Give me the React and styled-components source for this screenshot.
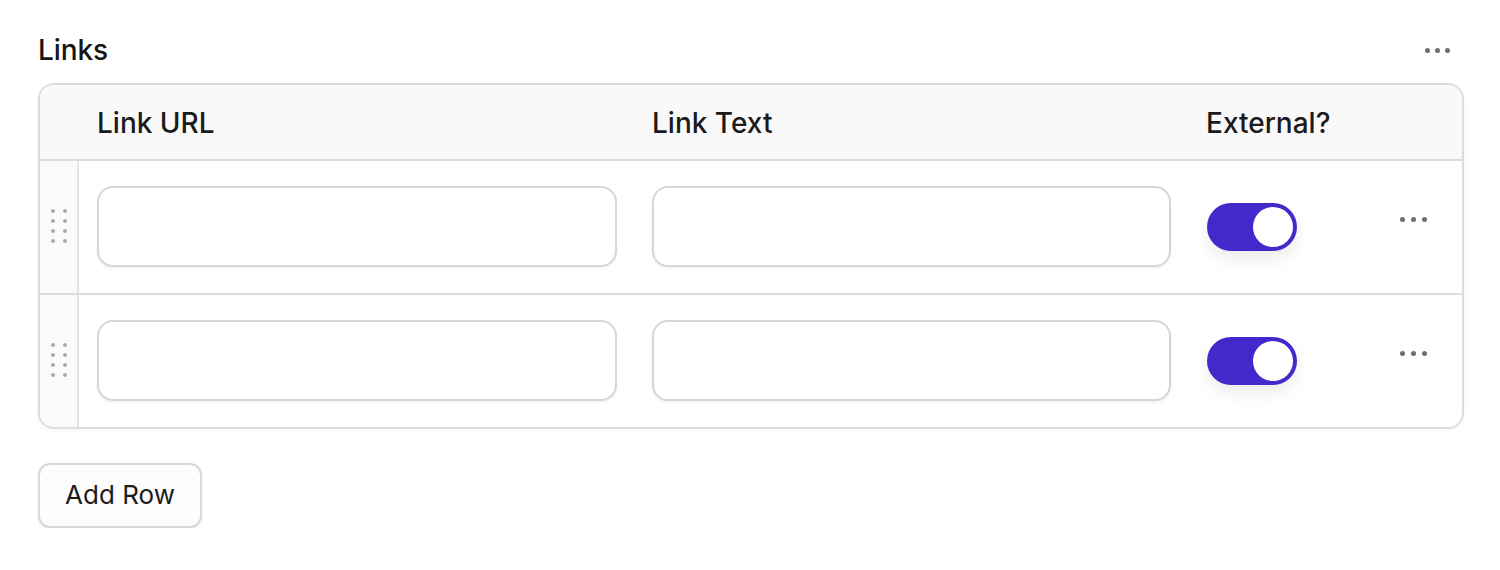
import React from "react";
import styled, { createGlobalStyle } from "styled-components";

const Global = createGlobalStyle`
  html, body { margin: 0; padding: 0; background: #fff; }
  body { font-family: Inter, "Noto Sans", "Liberation Sans", sans-serif; color: #1b1b1b; }
  * { box-sizing: border-box; }
`;

const Page = styled.div`
  padding: 26px 36px 0 38px;
  width: 1500px;
`;

const TitleRow = styled.div`
  display: flex;
  align-items: center;
  justify-content: space-between;
  height: 48px;
  margin-bottom: 9px;
`;

const Title = styled.h2`
  margin: 0;
  font-size: 28px;
  font-weight: 500;
  color: #161616;
  letter-spacing: -0.1px;
`;

const Dots = styled.div`
  display: flex;
  gap: ${(p) => p.$gap || 5}px;
  align-items: center;
  padding: ${(p) => p.$pad || "0"};
  span {
    width: ${(p) => p.$size || 5}px;
    height: ${(p) => p.$size || 5}px;
    border-radius: 50%;
    background: ${(p) => p.$color || "#6b6b6b"};
  }
`;

const Table = styled.div`
  border: 2px solid #dcdcdc;
  border-radius: 16px;
  overflow: hidden;
  width: 1426px;
  box-shadow: 0 2px 4px rgba(0, 0, 0, 0.04);
`;

const Row = styled.div`
  display: grid;
  grid-template-columns: 39px 556px 554px 1fr;
  background: ${(p) => (p.$header ? "#f9f9f9" : "#fff")};
  height: ${(p) => (p.$header ? 74 : 134)}px;
  border-top: ${(p) => (p.$first ? "none" : "2px solid #dcdcdc")};
`;

const HandleCell = styled.div`
  background: ${(p) => (p.$header ? "#f9f9f9" : "#fafafa")};
  border-right: ${(p) => (p.$header ? "none" : "2px solid #e3e3e3")};
  display: flex;
  align-items: center;
  justify-content: center;
`;

const HandleGrid = styled.div`
  display: grid;
  grid-template-columns: 4px 4px;
  column-gap: 8px;
  row-gap: 6px;
  margin-top: -2px;
  span {
    width: 4px;
    height: 4px;
    border-radius: 50%;
    background: #a9a9ae;
  }
`;

const HeadCell = styled.div`
  display: flex;
  align-items: center;
  padding-left: ${(p) => p.$pl || 18}px;
  font-size: 28px;
  font-weight: 500;
  color: #1b1b1b;
  padding-top: 2px;
`;

const Cell = styled.div`
  display: flex;
  align-items: center;
  padding: 0 18px;
  padding-bottom: 2px;
`;

const Input = styled.input`
  width: 521px;
  height: 81px;
  border: 2px solid #d6d6d6;
  border-radius: 16px;
  background: #fff;
  box-shadow: 0 2px 3px rgba(0, 0, 0, 0.05);
  outline: none;
  font-size: 24px;
  padding: 0 20px;
  margin-left: ${(p) => p.$ml || 0}px;
`;

const LastCell = styled.div`
  display: flex;
  align-items: center;
  justify-content: space-between;
  padding: 0 35px 0 18px;
  margin-top: -16px;
`;

const Toggle = styled.div`
  width: 90px;
  height: 48px;
  border-radius: 24px;
  background: #4129cc;
  position: relative;
  box-shadow: 0 8px 16px rgba(0, 0, 0, 0.08);
  margin-top: 16px;
  &::after {
    content: "";
    position: absolute;
    right: 4px;
    top: 4px;
    width: 40px;
    height: 40px;
    border-radius: 50%;
    background: #fff;
  }
`;

const AddButton = styled.button`
  margin-top: 34px;
  width: 164px;
  height: 65px;
  border: 2px solid #d9d9d9;
  border-radius: 12px;
  background: #fdfdfd;
  box-shadow: 0 2px 4px rgba(0, 0, 0, 0.06);
  font-family: inherit;
  font-size: 26px;
  font-weight: 400;
  color: #1b1b1b;
  padding: 0 0 2px;
`;

const ThreeDots = (props) => (
  <Dots {...props}>
    <span />
    <span />
    <span />
  </Dots>
);

const Handle = () => (
  <HandleGrid>
    {Array.from({ length: 8 }).map((_, i) => (
      <span key={i} />
    ))}
  </HandleGrid>
);

const DataRow = () => (
  <Row>
    <HandleCell>
      <Handle />
    </HandleCell>
    <Cell>
      <Input />
    </Cell>
    <Cell>
      <Input $ml={-1} />
    </Cell>
    <LastCell>
      <Toggle />
      <ThreeDots $gap={6} $size={5} $color="#6e6e6e" />
    </LastCell>
  </Row>
);

export default function App() {
  return (
    <Page>
      <Global />
      <TitleRow>
        <Title>Links</Title>
        <ThreeDots $gap={5} $size={5} $color="#6e6e6e" $pad="0 14px 0 0" />
      </TitleRow>
      <Table>
        <Row $header $first>
          <HandleCell $header />
          <HeadCell>Link URL</HeadCell>
          <HeadCell $pl={17}>Link Text</HeadCell>
          <HeadCell $pl={17}>External?</HeadCell>
        </Row>
        <DataRow />
        <DataRow />
      </Table>
      <AddButton>Add Row</AddButton>
    </Page>
  );
}
